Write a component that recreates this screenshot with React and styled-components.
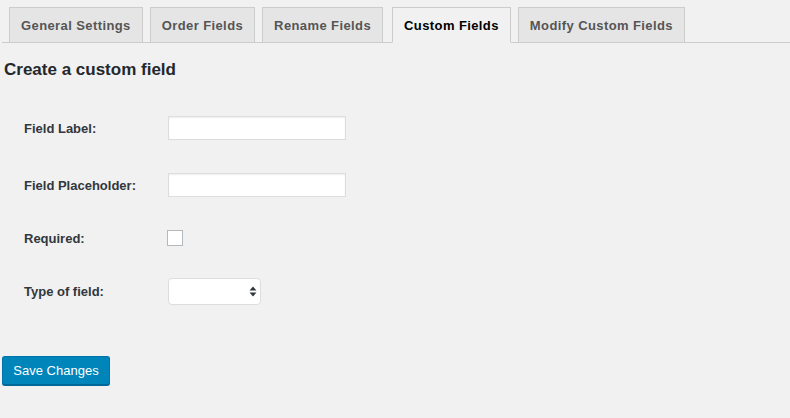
import React from 'react';
import styled, { createGlobalStyle } from 'styled-components';

const tabs = ["General Settings", "Order Fields", "Rename Fields", "Custom Fields", "Modify Custom Fields"]

const rows = [
    { label: "Field Label:", kind: "text", h: 56 },
    { label: "Field Placeholder:", kind: "text", h: 58 },
    { label: "Required:", kind: "checkbox", h: 48 },
    { label: "Type of field:", kind: "select", h: 58 },
]

export default function App(){
    return(
        <>
        <GlobalStyle/>
        <Wrap>
            <TabBar>
                {tabs.map((t) => <Tab key={t} active={t === "Custom Fields"}>{t}</Tab>)}
            </TabBar>
            <Title>Create a custom field</Title>
            <Form>
                {rows.map((r) => (
                    <Row key={r.label} h={r.h}>
                        <Label>{r.label}</Label>
                        {r.kind === "text" && <TextInput type="text"/>}
                        {r.kind === "checkbox" && <Check/>}
                        {r.kind === "select" && (
                            <Select>
                                <svg width="8" height="11" viewBox="0 0 8 11">
                                    <path d="M4 0.5 L7.5 4.5 L0.5 4.5 Z" fill="#32373c"/>
                                    <path d="M4 10.5 L7.5 6.5 L0.5 6.5 Z" fill="#32373c"/>
                                </svg>
                            </Select>
                        )}
                    </Row>
                ))}
            </Form>
            <SaveButton>Save Changes</SaveButton>
        </Wrap>
        </>
    )
}

const GlobalStyle = createGlobalStyle`

body{
    margin:0;
    background:#f1f1f1;
    font-family:"Liberation Sans", Arial, sans-serif;
    color:#23282d;
}

`

const Wrap = styled.div`
    width:790px;
    height:418px;
    padding:7px 0 0 2px;
    box-sizing:border-box;
`

const TabBar = styled.div`
    display:flex;
    border-bottom:1px solid #ccc;
    height:35px;
`

const Tab = styled.div`
    margin-left:${p => p.active ? 9 : 7}px;
    box-sizing:border-box;
    padding:0 11px;
    display:flex;
    align-items:center;
    border:1px solid #ccc;
    border-bottom:1px solid ${p => p.active ? "#f1f1f1" : "#ccc"};
    background:${p => p.active ? "#f1f1f1" : "#e5e5e5"};
    color:${p => p.active ? "#000" : "#555"};
    font-size:13px;
    letter-spacing:0.4px;
    font-weight:700;
    height:36px;
    margin-bottom:-1px;
`

const Title = styled.h3`
    margin:15px 0 0 2px;
    font-size:17px;
    line-height:24px;
    font-weight:700;
    color:#23282d;
`

const Form = styled.div`
    margin-top:18px;
    display:flex;
    flex-direction:column;
`

const Row = styled.div`
    height:${p => p.h}px;
    display:grid;
    grid-template-columns:166px 1fr;
    align-items:center;
`

const Label = styled.div`
    padding-left:22px;
    font-size:13px;
    font-weight:700;
    color:#32373c;
`

const TextInput = styled.input`
    width:178px;
    height:24px;
    box-sizing:border-box;
    border:1px solid #ddd;
    box-shadow:inset 0 1px 2px rgba(0,0,0,.07);
    background:#fff;
    margin:0;
    outline:none;
`

const Check = styled.div`
    width:16px;
    height:16px;
    box-sizing:border-box;
    margin-left:-1px;
    border:1px solid #b4b9be;
    background:#fff;
`

const Select = styled.div`
    width:93px;
    height:27px;
    box-sizing:border-box;
    border:1px solid #ddd;
    border-radius:4px;
    background:#fff;
    display:flex;
    align-items:center;
    justify-content:flex-end;
    padding-right:3px;
`

const SaveButton = styled.button`
    margin-top:36px;
    width:108px;
    height:29px;
    padding:0 0 1px;
    background:#0085ba;
    border:1px solid #0073aa;
    border-bottom-color:#006799;
    box-shadow:0 1px 0 #006799;
    border-radius:3px;
    color:#fff;
    font-family:"Liberation Sans", Arial, sans-serif;
    font-size:13px;
`
